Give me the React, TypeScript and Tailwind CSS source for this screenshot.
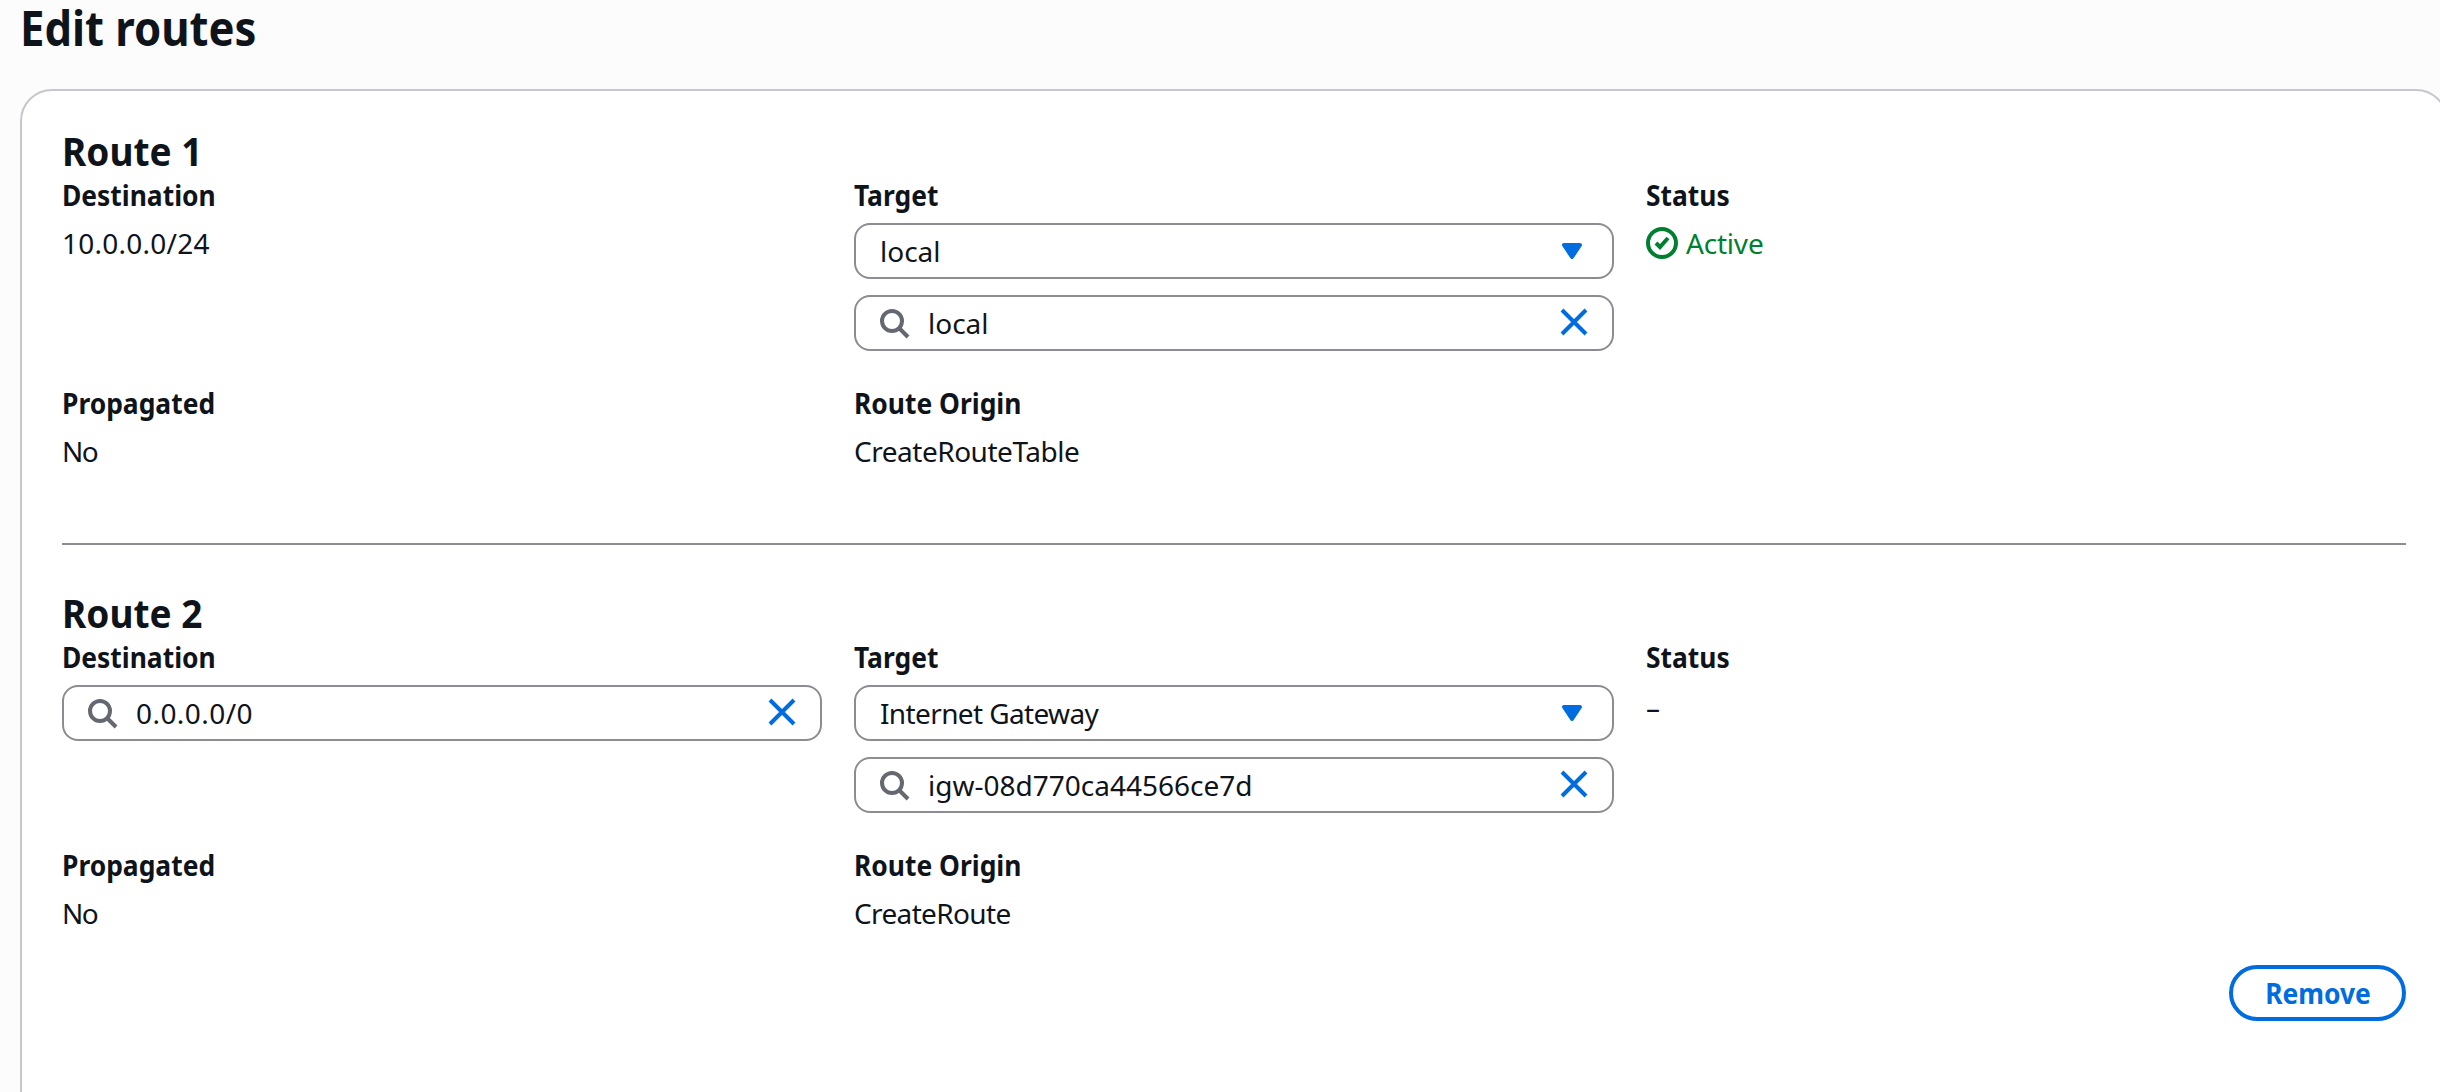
import type { ReactNode } from "react";

function SearchIcon() {
  return (
    <svg viewBox="0 0 16 16" className="size-8 shrink-0" fill="none" stroke="#656871" strokeWidth="2">
      <circle cx="7" cy="7" r="5" />
      <path d="m15 15-4.5-4.5" />
    </svg>
  );
}

function CloseIcon() {
  return (
    <svg viewBox="0 0 16 16" className="size-8 shrink-0" fill="none" stroke="#006ce0" strokeWidth="2">
      <path d="m2 2 12 12M14 2 2 14" />
    </svg>
  );
}

function CaretIcon() {
  return (
    <svg viewBox="0 0 16 16" className="size-8 shrink-0" fill="#006ce0" stroke="#006ce0" strokeWidth="2" strokeLinejoin="round">
      <path d="M4 5h8l-4 6-4-6Z" />
    </svg>
  );
}

function SuccessIcon() {
  return (
    <svg viewBox="0 0 16 16" className="size-8 shrink-0" fill="none" stroke="#00802f" strokeWidth="2">
      <circle cx="8" cy="8" r="7" />
      <path d="m5 8 2 2 4-4.5" />
    </svg>
  );
}

const box = "flex h-14 items-center rounded-2xl border-2 border-[#8c8c94] bg-white";

function Select({ children }: { children: ReactNode }) {
  return (
    <div className={`${box} justify-between px-6`}>
      {children}
      <CaretIcon />
    </div>
  );
}

function Search({ children }: { children: ReactNode }) {
  return (
    <div className={`${box} px-[22px]`}>
      <SearchIcon />
      <div className="ml-[18px] flex-1">{children}</div>
      <div className="-mt-0.5">
        <CloseIcon />
      </div>
    </div>
  );
}

function Field({ label, children }: { label: ReactNode; children: ReactNode }) {
  return (
    <div>
      <div className="mb-2 h-10 origin-left scale-x-[0.943] font-bold">{label}</div>
      {children}
    </div>
  );
}

function RouteTitle({ children }: { children: ReactNode }) {
  return (
    <h2 className="h-12 origin-left scale-x-[0.925] text-[40px] leading-[48px] font-bold">{children}</h2>
  );
}

const grid = "grid grid-cols-[760px_760px_760px] gap-8";

export default function App() {
  return (
    <div className="h-[1092px] overflow-hidden bg-[#fcfcfd] font-['Noto_Sans',sans-serif] text-[28px] leading-10 text-[#0f141a]">
      <h1 className="ml-5 origin-left scale-x-[0.909] text-5xl leading-[56px] font-bold">Edit routes</h1>
      <main className="mt-[33px] ml-5 h-[1100px] w-[2428px] rounded-[32px] border-2 border-[#c6c6cd] bg-white px-10 pt-9">
        <section>
          <RouteTitle>Route 1</RouteTitle>
          <div className={grid}>
            <Field label="Destination">
              <span className="tracking-[0.25px]">10.0.0.0/24</span>
            </Field>
            <Field label="Target">
              <div className="flex flex-col gap-4">
                <Select>
                  <span>local</span>
                </Select>
                <Search>
                  <span>local</span>
                </Search>
              </div>
            </Field>
            <Field label="Status">
              <div className="flex items-center gap-2 text-[#00802f]">
                <SuccessIcon />
                <span className="tracking-[-0.2px]">Active</span>
              </div>
            </Field>
            <Field label="Propagated">
              <span className="tracking-[-1.5px]">No</span>
            </Field>
            <Field label="Route Origin">
              <span className="tracking-[-0.48px]">CreateRouteTable</span>
            </Field>
          </div>
        </section>

        <div className="mt-[72px] mb-11 h-0.5 bg-[#8c8c94]" />

        <section>
          <RouteTitle>Route 2</RouteTitle>
          <div className={grid}>
            <Field label="Destination">
              <Search>
                <span className="tracking-[0.44px]">0.0.0.0/0</span>
              </Search>
            </Field>
            <Field label="Target">
              <div className="flex flex-col gap-4">
                <Select>
                  <span className="tracking-[-0.62px]">Internet Gateway</span>
                </Select>
                <Search>
                  <span>igw-08d770ca44566ce7d</span>
                </Search>
              </div>
            </Field>
            <Field label="Status">
              <div className="pt-0.5">–</div>
            </Field>
            <Field label="Propagated">
              <span className="tracking-[-1.5px]">No</span>
            </Field>
            <Field label="Route Origin">
              <span className="tracking-[-0.64px]">CreateRoute</span>
            </Field>
          </div>
          <div className="mt-8 flex justify-end">
            <button className="h-14 w-[177px] rounded-full border-4 border-[#006ce0] pl-px font-bold text-[#006ce0]">
              <span className="inline-block scale-x-[0.943]">Remove</span>
            </button>
          </div>
        </section>
      </main>
    </div>
  );
}
